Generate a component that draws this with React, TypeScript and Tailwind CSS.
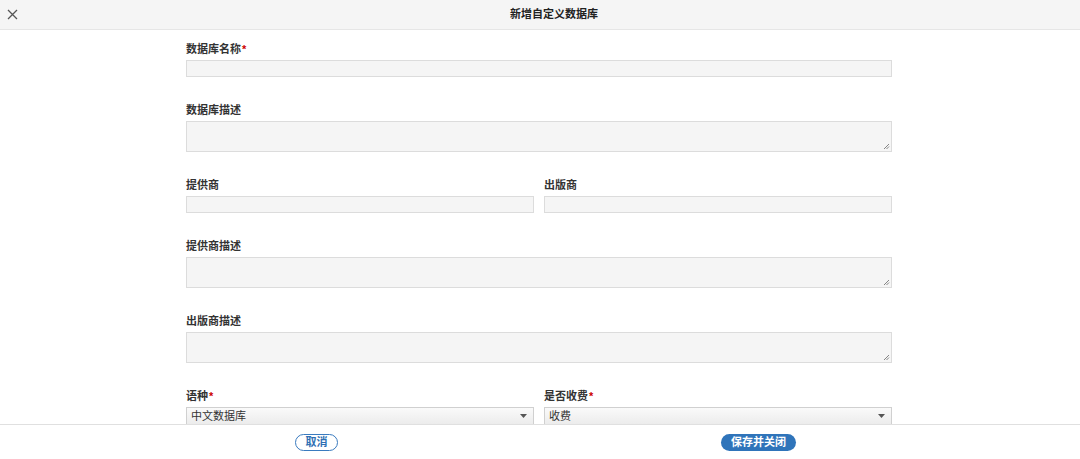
import React from "react";

const font = { fontFamily: '"Liberation Sans", "Noto Sans CJK SC", sans-serif' };

function Label({ text, required }: { text: string; required?: boolean }) {
  return (
    <div className="mb-[4px] h-[14px] text-[11px] font-bold leading-[14px] text-[#333]">
      {text}
      {required && <span className="ml-[1px] text-[#cc0000]">*</span>}
    </div>
  );
}

function Input() {
  return <div className="h-[17px] w-full border border-[#dcdcdc] bg-[#f5f5f5]" />;
}

function Textarea() {
  return (
    <div className="relative h-[31px] w-full border border-[#dcdcdc] bg-[#f5f5f5]">
      <svg className="absolute bottom-[1px] right-[1px]" width="7" height="7" viewBox="0 0 7 7">
        <path d="M6 1 L1 6 M6 3.5 L3.5 6" stroke="#777" strokeWidth="0.9" />
      </svg>
    </div>
  );
}

function Select({ value }: { value: string }) {
  return (
    <div className="flex h-[18px] w-full items-center justify-between border border-[#d0d0d0] bg-gradient-to-b from-[#fafafa] to-[#ececec] pl-[4px] pr-[6px] text-[11px] text-[#333]">
      <span>{value}</span>
      <svg width="7" height="4" viewBox="0 0 7 4">
        <path d="M0 0 H7 L3.5 4 Z" fill="#555" />
      </svg>
    </div>
  );
}

export default function App() {
  return (
    <div className="relative h-[459px] w-[1080px] overflow-hidden bg-white" style={font}>
      <div className="flex h-[30px] items-center border-b border-[#e6e6e6] bg-[#f5f5f5]">
        <svg className="ml-[7px]" width="11" height="11" viewBox="0 0 11 11">
          <path d="M1 1 L10 10 M10 1 L1 10" stroke="#555" strokeWidth="1.3" />
        </svg>
        <div className="flex-1 pl-[10px] text-center text-[11px] font-bold text-[#222]">
          新增自定义数据库
        </div>
      </div>

      <div className="ml-[186px] mr-[188px] mt-[12px] flex flex-col">
        <div className="mb-[26px]">
          <Label text="数据库名称" required />
          <Input />
        </div>
        <div className="mb-[26px]">
          <Label text="数据库描述" />
          <Textarea />
        </div>
        <div className="mb-[26px] grid grid-cols-2 gap-x-[10px]">
          <div>
            <Label text="提供商" />
            <Input />
          </div>
          <div>
            <Label text="出版商" />
            <Input />
          </div>
        </div>
        <div className="mb-[26px]">
          <Label text="提供商描述" />
          <Textarea />
        </div>
        <div className="mb-[26px]">
          <Label text="出版商描述" />
          <Textarea />
        </div>
        <div className="grid grid-cols-2 gap-x-[10px]">
          <div>
            <Label text="语种" required />
            <Select value="中文数据库" />
          </div>
          <div>
            <Label text="是否收费" required />
            <Select value="收费" />
          </div>
        </div>
      </div>

      <div className="absolute inset-x-0 bottom-0 flex h-[35px] items-center border-t border-[#e0e0e0] bg-white">
        <button className="ml-[295px] flex h-[17px] w-[43px] items-center justify-center rounded-full border border-[#3a7bbf] bg-white text-[11px] font-bold text-[#2f6fb3]">
          取消
        </button>
        <button className="ml-[383px] flex h-[17px] w-[75px] items-center justify-center rounded-full bg-[#2f74ba] text-[11px] font-bold text-white">
          保存并关闭
        </button>
      </div>
    </div>
  );
}
